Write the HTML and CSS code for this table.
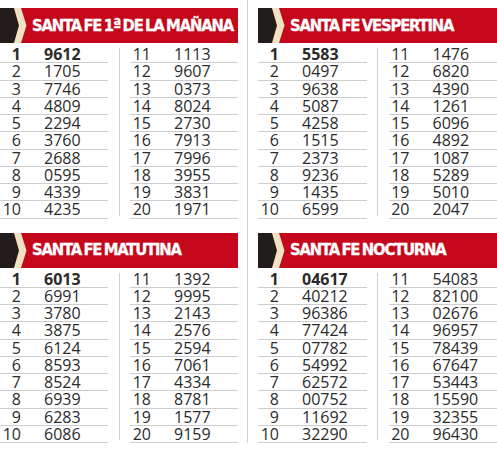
FILE: index.html
```html
<!DOCTYPE html>
<html lang="es">
<head>
<meta charset="utf-8">
<title>Quinielas Santa Fe</title>
<link rel="stylesheet" href="styles.css">
</head>
<body>
<main class="page">
  <section class="panel p-tl">
    <header class="head">
      <svg class="chev" viewBox="0 0 30 35" width="30" height="35" aria-hidden="true"><polygon points="0,0 14,0 19,17.5 14,35 0,35" fill="#221d1a"/><polygon points="14,0 21,0 26.5,17.5 21,35 14,35 19,17.5" fill="#efe3c4"/></svg>
      <h2 class="title">SANTA FE 1ª DE LA MAÑANA</h2>
    </header>
    <div class="cols">
      <ol class="col">
        <li class="row first"><span class="pos">1</span><span class="val">9612</span></li>
        <li class="row"><span class="pos">2</span><span class="val">1705</span></li>
        <li class="row"><span class="pos">3</span><span class="val">7746</span></li>
        <li class="row"><span class="pos">4</span><span class="val">4809</span></li>
        <li class="row"><span class="pos">5</span><span class="val">2294</span></li>
        <li class="row"><span class="pos">6</span><span class="val">3760</span></li>
        <li class="row"><span class="pos">7</span><span class="val">2688</span></li>
        <li class="row"><span class="pos">8</span><span class="val">0595</span></li>
        <li class="row"><span class="pos">9</span><span class="val">4339</span></li>
        <li class="row"><span class="pos">10</span><span class="val">4235</span></li>
      </ol>
      <div class="vline"></div>
      <ol class="col">
        <li class="row"><span class="pos">11</span><span class="val">1113</span></li>
        <li class="row"><span class="pos">12</span><span class="val">9607</span></li>
        <li class="row"><span class="pos">13</span><span class="val">0373</span></li>
        <li class="row"><span class="pos">14</span><span class="val">8024</span></li>
        <li class="row"><span class="pos">15</span><span class="val">2730</span></li>
        <li class="row"><span class="pos">16</span><span class="val">7913</span></li>
        <li class="row"><span class="pos">17</span><span class="val">7996</span></li>
        <li class="row"><span class="pos">18</span><span class="val">3955</span></li>
        <li class="row"><span class="pos">19</span><span class="val">3831</span></li>
        <li class="row"><span class="pos">20</span><span class="val">1971</span></li>
      </ol>
    </div>
  </section>

  <div class="gutter"></div>

  <section class="panel p-tr">
    <header class="head">
      <svg class="chev" viewBox="0 0 30 35" width="30" height="35" aria-hidden="true"><polygon points="0,0 14,0 19,17.5 14,35 0,35" fill="#221d1a"/><polygon points="14,0 21,0 26.5,17.5 21,35 14,35 19,17.5" fill="#efe3c4"/></svg>
      <h2 class="title">SANTA FE VESPERTINA</h2>
    </header>
    <div class="cols">
      <ol class="col">
        <li class="row first"><span class="pos">1</span><span class="val">5583</span></li>
        <li class="row"><span class="pos">2</span><span class="val">0497</span></li>
        <li class="row"><span class="pos">3</span><span class="val">9638</span></li>
        <li class="row"><span class="pos">4</span><span class="val">5087</span></li>
        <li class="row"><span class="pos">5</span><span class="val">4258</span></li>
        <li class="row"><span class="pos">6</span><span class="val">1515</span></li>
        <li class="row"><span class="pos">7</span><span class="val">2373</span></li>
        <li class="row"><span class="pos">8</span><span class="val">9236</span></li>
        <li class="row"><span class="pos">9</span><span class="val">1435</span></li>
        <li class="row"><span class="pos">10</span><span class="val">6599</span></li>
      </ol>
      <div class="vline"></div>
      <ol class="col">
        <li class="row"><span class="pos">11</span><span class="val">1476</span></li>
        <li class="row"><span class="pos">12</span><span class="val">6820</span></li>
        <li class="row"><span class="pos">13</span><span class="val">4390</span></li>
        <li class="row"><span class="pos">14</span><span class="val">1261</span></li>
        <li class="row"><span class="pos">15</span><span class="val">6096</span></li>
        <li class="row"><span class="pos">16</span><span class="val">4892</span></li>
        <li class="row"><span class="pos">17</span><span class="val">1087</span></li>
        <li class="row"><span class="pos">18</span><span class="val">5289</span></li>
        <li class="row"><span class="pos">19</span><span class="val">5010</span></li>
        <li class="row"><span class="pos">20</span><span class="val">2047</span></li>
      </ol>
    </div>
  </section>

  <section class="panel p-bl">
    <header class="head">
      <svg class="chev" viewBox="0 0 30 35" width="30" height="35" aria-hidden="true"><polygon points="0,0 14,0 19,17.5 14,35 0,35" fill="#221d1a"/><polygon points="14,0 21,0 26.5,17.5 21,35 14,35 19,17.5" fill="#efe3c4"/></svg>
      <h2 class="title">SANTA FE MATUTINA</h2>
    </header>
    <div class="cols">
      <ol class="col">
        <li class="row first"><span class="pos">1</span><span class="val">6013</span></li>
        <li class="row"><span class="pos">2</span><span class="val">6991</span></li>
        <li class="row"><span class="pos">3</span><span class="val">3780</span></li>
        <li class="row"><span class="pos">4</span><span class="val">3875</span></li>
        <li class="row"><span class="pos">5</span><span class="val">6124</span></li>
        <li class="row"><span class="pos">6</span><span class="val">8593</span></li>
        <li class="row"><span class="pos">7</span><span class="val">8524</span></li>
        <li class="row"><span class="pos">8</span><span class="val">6939</span></li>
        <li class="row"><span class="pos">9</span><span class="val">6283</span></li>
        <li class="row"><span class="pos">10</span><span class="val">6086</span></li>
      </ol>
      <div class="vline"></div>
      <ol class="col">
        <li class="row"><span class="pos">11</span><span class="val">1392</span></li>
        <li class="row"><span class="pos">12</span><span class="val">9995</span></li>
        <li class="row"><span class="pos">13</span><span class="val">2143</span></li>
        <li class="row"><span class="pos">14</span><span class="val">2576</span></li>
        <li class="row"><span class="pos">15</span><span class="val">2594</span></li>
        <li class="row"><span class="pos">16</span><span class="val">7061</span></li>
        <li class="row"><span class="pos">17</span><span class="val">4334</span></li>
        <li class="row"><span class="pos">18</span><span class="val">8781</span></li>
        <li class="row"><span class="pos">19</span><span class="val">1577</span></li>
        <li class="row"><span class="pos">20</span><span class="val">9159</span></li>
      </ol>
    </div>
  </section>

  <section class="panel p-br">
    <header class="head">
      <svg class="chev" viewBox="0 0 30 35" width="30" height="35" aria-hidden="true"><polygon points="0,0 14,0 19,17.5 14,35 0,35" fill="#221d1a"/><polygon points="14,0 21,0 26.5,17.5 21,35 14,35 19,17.5" fill="#efe3c4"/></svg>
      <h2 class="title">SANTA FE NOCTURNA</h2>
    </header>
    <div class="cols">
      <ol class="col">
        <li class="row first"><span class="pos">1</span><span class="val">04617</span></li>
        <li class="row"><span class="pos">2</span><span class="val">40212</span></li>
        <li class="row"><span class="pos">3</span><span class="val">96386</span></li>
        <li class="row"><span class="pos">4</span><span class="val">77424</span></li>
        <li class="row"><span class="pos">5</span><span class="val">07782</span></li>
        <li class="row"><span class="pos">6</span><span class="val">54992</span></li>
        <li class="row"><span class="pos">7</span><span class="val">62572</span></li>
        <li class="row"><span class="pos">8</span><span class="val">00752</span></li>
        <li class="row"><span class="pos">9</span><span class="val">11692</span></li>
        <li class="row"><span class="pos">10</span><span class="val">32290</span></li>
      </ol>
      <div class="vline"></div>
      <ol class="col">
        <li class="row"><span class="pos">11</span><span class="val">54083</span></li>
        <li class="row"><span class="pos">12</span><span class="val">82100</span></li>
        <li class="row"><span class="pos">13</span><span class="val">02676</span></li>
        <li class="row"><span class="pos">14</span><span class="val">96957</span></li>
        <li class="row"><span class="pos">15</span><span class="val">78439</span></li>
        <li class="row"><span class="pos">16</span><span class="val">67647</span></li>
        <li class="row"><span class="pos">17</span><span class="val">53443</span></li>
        <li class="row"><span class="pos">18</span><span class="val">15590</span></li>
        <li class="row"><span class="pos">19</span><span class="val">32355</span></li>
        <li class="row"><span class="pos">20</span><span class="val">96430</span></li>
      </ol>
    </div>
  </section>
</main>
</body>
</html>
```

FILE: styles.css
```css
* { box-sizing: border-box; }

html, body {
  margin: 0;
  padding: 0;
  background: #ffffff;
}

.page {
  display: grid;
  grid-template-columns: 238px 20px 239px;
  grid-template-rows: auto auto;
  align-content: start;
  min-height: 452px;
  width: 497px;
  font-family: "Open Sans", "Noto Sans", sans-serif;
  color: #2b2b2b;
}

.p-tl { grid-column: 1; grid-row: 1; padding-top: 8px; }
.p-tr { grid-column: 3; grid-row: 1; padding-top: 8px; }
.p-bl { grid-column: 1; grid-row: 2; padding-top: 14px; }
.p-br { grid-column: 3; grid-row: 2; padding-top: 14px; }

.gutter {
  grid-column: 2;
  grid-row: 1 / 3;
  display: flex;
  padding-left: 9px;
}

.gutter::before {
  content: "";
  width: 1px;
  background: #d2d2d2;
}

.head {
  display: flex;
  align-items: center;
  height: 35px;
  background: #c5071b;
  overflow: hidden;
}

.chev {
  display: block;
  flex: none;
  width: 30px;
  height: 35px;
}

.title {
  margin: 1px 0 0 2px;
  font-family: "DejaVu Sans Condensed", "Liberation Sans Narrow", sans-serif;
  font-weight: 700;
  font-size: 16.5px;
  letter-spacing: -1.2px;
  word-spacing: -1.5px;
  color: #ffffff;
  -webkit-text-stroke: 0.3px #ffffff;
  line-height: 1;
  white-space: nowrap;
}

.cols {
  display: grid;
  grid-template-columns: 1fr 22px 1fr;
  padding-top: 3px;
}

.vline {
  justify-self: center;
  width: 1px;
  background: #cfcfcf;
  margin: 2px 0 3px;
}

.col {
  list-style: none;
  margin: 0;
  padding: 0;
}

.row {
  display: grid;
  grid-template-columns: 21px 1fr;
  column-gap: 23px;
  height: 17.25px;
  line-height: 16.25px;
  font-size: 16px;
  border-bottom: 1px solid #cdcdcd;
}

.pos { text-align: right; }

.first { font-weight: 700; }
```
